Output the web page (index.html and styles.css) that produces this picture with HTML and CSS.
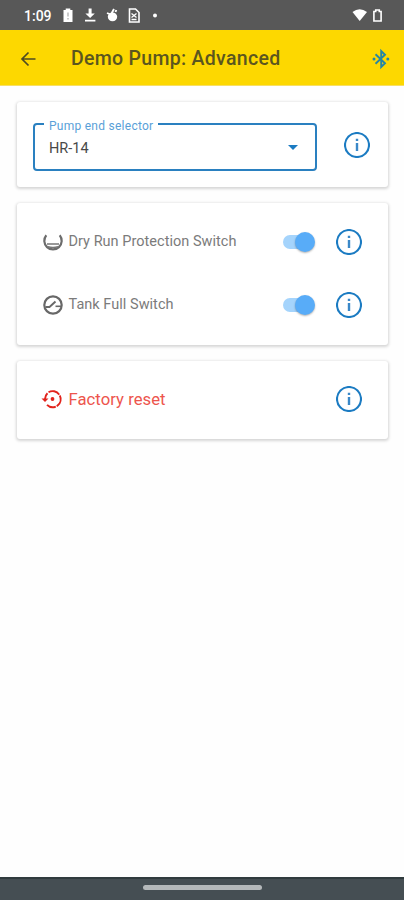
FILE: index.html
```
<!DOCTYPE html>
<html lang="en">
<head>
<meta charset="utf-8">
<title>Demo Pump: Advanced</title>
<link rel="stylesheet" href="styles.css">
</head>
<body>
<svg class="defs" width="0" height="0">
  <symbol id="info" viewBox="0 0 26 26">
    <circle cx="13" cy="13" r="12" fill="none" stroke="#1b7bc2" stroke-width="2.100"/>
    <path d="M11.800 6.800h2.400v2.200h-2.400zM11.800 11h2.400v8h-2.400z" fill="#3a88c8"/>
  </symbol>
</svg>
<header class="status">
  <span class="time">1:09</span>
  <svg class="status-left" width="96" height="18" viewBox="0 0 96 18">
    <path d="M2.500 3h2.200V1.500h4.600V3h2.200v12h-9z" fill="#fff"/>
    <path d="M7 5.500v4M7 11v1.500" stroke="#aaa" stroke-width="1.200"/>
    <path d="M27.600 1.500h3v5h3.200L29.100 11l-4.700-4.500h3.200zM24 12.700h10.400v1.800H24z" fill="#fff"/>
    <ellipse cx="51.500" cy="9.800" rx="4.700" ry="4.400" fill="#fff"/>
    <path d="M46 6l3.500 1.500M50.500 6.500l2.500-4.500M54.500 5l.8-2" stroke="#fff" stroke-width="1.900"/>
    <path d="M68.500 2h6l3.500 3.500V15h-9.500z" fill="none" stroke="#fff" stroke-width="1.600"/>
    <path d="M70.500 6.500l5 4M75.500 6.500l-5 4M70.500 12.500h5" stroke="#fff" stroke-width="1.300"/>
    <circle cx="94" cy="8.500" r="2" fill="#fff"/>
  </svg>
  <svg class="status-right" width="32" height="18" viewBox="0 0 32 18">
    <path d="M.5 5Q7.500-.500 15 5L7.700 14z" fill="#fff"/>
    <path d="M21.900 4.500h1.800V3h3.600v1.500h1.800v9.500h-7.200z" fill="none" stroke="#fff" stroke-width="1.600"/>
  </svg>
</header>
<div class="appbar">
  <svg class="back" width="16" height="16" viewBox="0 0 16 16"><path d="M15.500 8H2M8.500 1.500L2 8l6.500 6.500" fill="none" stroke="#4e4b22" stroke-width="1.700"/></svg>
  <h1>Demo Pump: Advanced</h1>
  <svg class="bt" width="18" height="20" viewBox="0 0 18 20"><path d="M3.500 5.200l9.500 9-3.800 3.800V2L13 5.800l-9.500 9" fill="none" stroke="#2585a5" stroke-width="1.900"/><circle cx="2" cy="10" r="1.500" fill="#2585a5"/><circle cx="15.800" cy="10" r="1.500" fill="#2585a5"/></svg>
</div>
<main>
  <section class="card selector">
    <div class="field">
      <span class="label">Pump end selector</span>
      <span class="value">HR-14</span>
      <svg width="10" height="5" viewBox="0 0 10 5"><path d="M0 0h10L5 5z" fill="#1b7bc2"/></svg>
    </div>
    <svg class="info"><use href="#info"/></svg>
  </section>
  <section class="card switches">
    <div class="row">
      <svg class="icon" width="20" height="20" viewBox="0 0 20 20"><path d="M3.300 3.200A8.700 8.700 0 1 0 16.700 3.200" fill="none" stroke="#6c6c6c" stroke-width="2.200"/><path d="M4 12h12M5 14.800q5 1.200 10 0" fill="none" stroke="#777" stroke-width="1.500"/></svg>
      <span class="text dry">Dry Run Protection Switch</span>
      <span class="toggle"></span>
      <svg class="info"><use href="#info"/></svg>
    </div>
    <div class="row">
      <svg class="icon" width="20" height="20" viewBox="0 0 20 20"><circle cx="10" cy="10" r="8.700" fill="none" stroke="#686868" stroke-width="2.200"/><path d="M2.500 12h4L12.500 6.500" fill="none" stroke="#686868" stroke-width="1.900"/><path d="M12.500 11.300h6" stroke="#686868" stroke-width="1.600"/></svg>
      <span class="text tank">Tank Full Switch</span>
      <span class="toggle"></span>
      <svg class="info"><use href="#info"/></svg>
    </div>
  </section>
  <section class="card reset">
    <div class="row">
      <svg class="icon" width="20" height="20" viewBox="0 0 20 20"><path d="M3 10A8 8 0 0 1 5.500 4.200" fill="none" stroke="#e2231c" stroke-width="1.900"/><path d="M6.500 3.300A8 8 0 1 1 5 15.800" fill="none" stroke="#e2231c" stroke-width="1.900" stroke-dasharray="12 1"/><path d="M-.5 9.600h7L3 13z" fill="#e2231c"/><circle cx="10.500" cy="10" r="1.900" fill="#e2231c"/></svg>
      <span class="text factory">Factory reset</span>
      <svg class="info"><use href="#info"/></svg>
    </div>
  </section>
</main>
<footer class="nav"><span class="handle"></span></footer>
</body>
</html>
```
FILE: styles.css
```
* { box-sizing: border-box; }
body {
  margin: 0;
  width: 404px;
  height: 900px;
  display: flex;
  flex-direction: column;
  background: #fefefe;
  font-family: Roboto, "Liberation Sans", sans-serif;
  overflow: hidden;
}
svg { display: block; flex: none; overflow: visible; }
.defs { position: absolute; }
.status {
  height: 30px;
  flex: none;
  display: flex;
  align-items: center;
  padding: 2px 20px 0 24px;
  background: #585858;
}
.time { width: 37px; font-size: 14px; font-weight: 500; color: #fff; white-space: nowrap; }
.status-right { margin-left: auto; }
.appbar {
  height: 56px;
  flex: none;
  display: flex;
  align-items: center;
  padding: 2px 14px 0 20px;
  background: #fdd800;
  border-bottom: 1px solid #f7df65;
}
h1 {
  margin: 1px auto 0 35px;
  font-size: 19.5px;
  line-height: 24px;
  font-weight: 500;
  letter-spacing: .3px;
  color: #5b561f;
  white-space: nowrap;
}
main { flex: 1; padding: 16px 16px 0 17px; display: flex; flex-direction: column; gap: 16px; }
.card {
  border-radius: 3px;
  background: #fff;
  box-shadow: 0 1px 3px 1px rgba(0, 0, 0, .16);
}
.selector { height: 85px; display: flex; align-items: center; padding: 5px 18.5px 0 16px; justify-content: space-between; }
.selector .info { margin-bottom: 4px; }
.field {
  position: relative;
  width: 284px;
  height: 48px;
  display: flex;
  align-items: center;
  justify-content: space-between;
  padding: 1px 17px 0 14px;
  border: 2px solid #2a80c0;
  border-radius: 4px;
}
.label {
  position: absolute;
  left: 9px;
  top: -7px;
  padding: 0 5px;
  background: #fff;
  font-size: 12px;
  line-height: 16px;
  letter-spacing: .26px;
  color: #5a9fd8;
  white-space: nowrap;
}
.value { margin-top: 2px; font-size: 14.5px; color: #484848; }
.info { width: 26px; height: 26px; }
.switches { height: 142px; padding: 7px 26.5px 0 26px; }
.row { height: 63px; display: flex; align-items: center; }
.icon { margin-left: -.5px; }
.text { margin: -1px auto 0 6px; font-size: 14.5px; letter-spacing: .03px; color: #7b7b7b; white-space: nowrap; }
.toggle { position: relative; width: 30px; height: 14px; margin: 1px 22.5px 0 0; border-radius: 7px; background: #a5d4fc; }
.toggle::after {
  content: "";
  position: absolute;
  right: -2px;
  top: -3px;
  width: 20px;
  height: 20px;
  border-radius: 50%;
  background: #58acf8;
  box-shadow: 0 1px 2px rgba(0, 0, 0, .3);
}
.reset { height: 78px; padding: 6px 26.5px 0 26px; }
.reset .text { margin-top: 1px; font-size: 16.700px; color: #ed554d; }
.reset .icon { margin-left: -1.500px; margin-right: 1px; }
.nav { height: 23px; flex: none; display: flex; justify-content: center; background: #454e53; border-top: 2px solid #303b3e; }
.handle { width: 119px; height: 5px; margin-top: 6px; border-radius: 3px; background: #b4b8ba; }
```
